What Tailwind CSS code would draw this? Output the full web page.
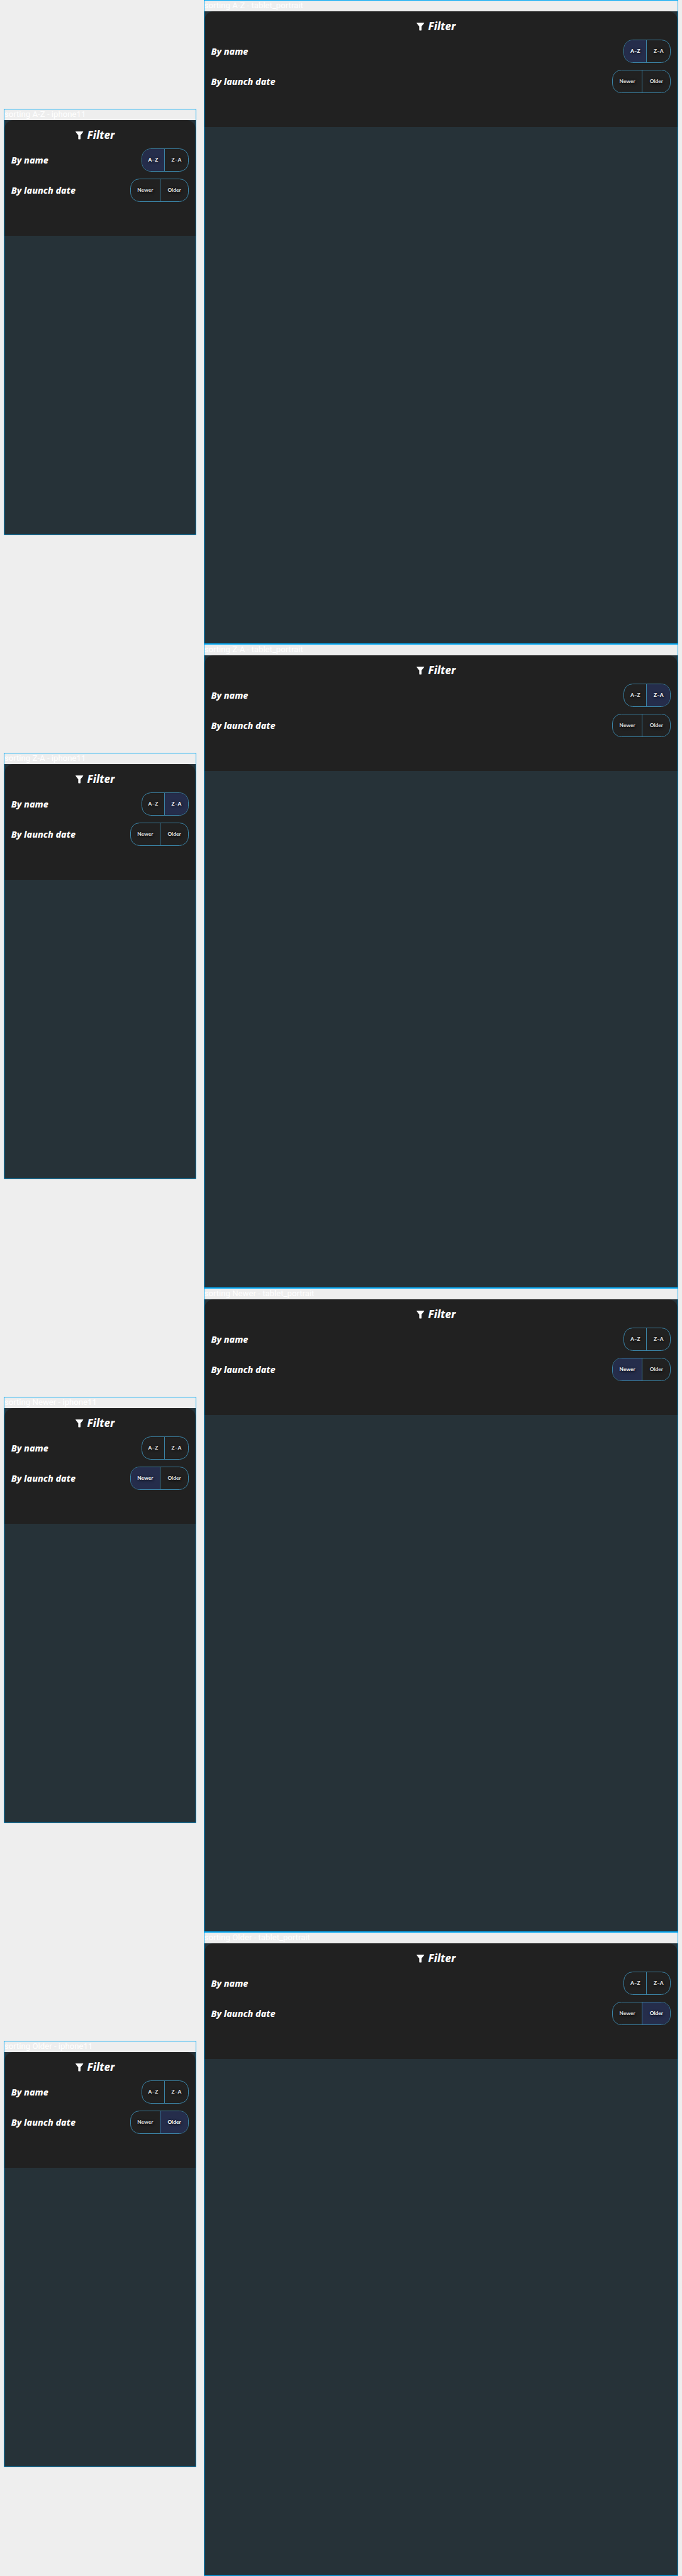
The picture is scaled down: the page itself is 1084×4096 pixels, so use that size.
<!DOCTYPE html>
<html lang="en">
<head>
<meta charset="utf-8">
<title>Filter sorting</title>
<script src="https://cdn.jsdelivr.net/npm/@tailwindcss/browser@4"></script>
</head>
<body class="bg-[#eeeeee] overflow-x-hidden">
<main id="board" class="flex flex-col w-[1084px] h-[4096px]"></main>
<script>
const option = (text, active, first) => `
  <button class="flex items-center justify-center h-full ${first ? 'border-r border-[#3b83a5]' : 'grow'} ${text.length > 3 ? (first ? 'w-[47.4px]' : '') : (first ? 'w-[36px]' : '')} ${active ? 'bg-[#252d4b] text-white' : 'text-[#e2e2e2]'}">
    <span class="font-[Lato,sans-serif] text-[8.4px] font-bold leading-none pb-px [text-shadow:1px_1px_4px_#000]">${text}</span>
  </button>`;

const row = (label, a, b, active, width) => `
  <div class="flex items-center justify-between h-[36.8px] mb-[11px]">
    <span class="pt-px text-[14.4px] font-extrabold italic text-white leading-none">${label}</span>
    <div class="flex ${width} h-full rounded-[14.7px] border border-[#3b83a5] overflow-hidden">
      ${option(a, active === a, true)}${option(b, active === b, false)}
    </div>
  </div>`;

const device = (active, name, size) => `
  <section class="flex flex-col shrink-0 ${size} border border-[#03a9f4]">
    <div class="h-[17.4px] shrink-0 font-[Roboto,sans-serif] text-[13.2px] leading-[15.6px] text-white whitespace-nowrap">sorting ${active.replace('–', '-')} - ${name}</div>
    <div class="grow bg-[#263238]">
      <div class="h-[184px] bg-[#212121] rounded-t-[14.7px] px-[10.8px] font-['Noto_Sans',sans-serif]">
        <div class="flex justify-center items-center h-[44.9px] pt-[3px] pr-[15.4px] gap-[6px]">
          <svg class="w-[12.4px] h-[12.6px]" viewBox="0 0 17 17" fill="#fff"><path d="M.8 0h15.4q1 .1.6 1L11 8.200V16q0 1-1 1H7q-1 0-1-1V8.200L.2 1Q-.2.1.8 0Z"/></svg>
          <span class="text-[16.800px] font-extrabold italic text-white leading-none">Filter</span>
        </div>
        ${row('By name', 'A–Z', 'Z–A', active, 'w-[75px]')}
        ${row('By launch date', 'Newer', 'Older', active, 'w-[93.400px]')}
      </div>
    </div>
  </section>`;

document.getElementById('board').innerHTML = ['A–Z', 'Z–A', 'Newer', 'Older'].map(s => `
  <div class="flex items-center h-[1024px] pl-[5.9px] gap-[11.8px]">
    ${device(s, 'iphone11', 'w-[305.900px] h-[678.200px]')}
    ${device(s, 'tablet_portrait', 'w-[754.500px] h-[1024px]')}
  </div>`).join('');
</script>
</body>
</html>
